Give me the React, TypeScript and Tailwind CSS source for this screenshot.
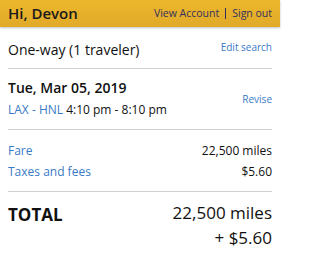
export default function App() {
  return (
    <div className="w-[280px] h-[258px] bg-white font-['Open_Sans',sans-serif] text-[#111]">
      <div className="h-[27px] bg-gradient-to-b from-[#edb72d] to-[#e0a928] shadow-[0_1px_2px_rgba(0,0,0,0.25)] flex items-center justify-between px-2">
        <span className="text-[15px] font-semibold text-[#1a1a1a]">Hi, Devon</span>
        <div className="flex items-center text-[10.5px] text-[#33305e]">
          <span>View Account</span>
          <span className="mx-[6px] h-[11px] w-px bg-[#33305e]" />
          <span>Sign out</span>
        </div>
      </div>
      <div className="px-2">
        <div className="flex items-center justify-between h-[42px] border-b border-[#cfcfcf]">
          <span className="text-[14px] mt-[4px]">One-way (1 traveler)</span>
          <span className="text-[10px] text-[#3b7ac6] -mt-[1px]">Edit search</span>
        </div>
        <div className="flex items-center justify-between h-[61px] border-b border-[#cfcfcf]">
          <div>
            <div className="text-[14px] leading-[20px] font-semibold">Tue, Mar 05, 2019</div>
            <div className="text-[12px] leading-[20px] mt-[2px]">
              <span className="text-[#3b7ac6]">LAX - HNL</span> 4:10 pm - 8:10 pm
            </div>
          </div>
          <span className="text-[10px] text-[#3b7ac6] mt-[1px]">Revise</span>
        </div>
        <div className="h-[62px] border-b border-[#cfcfcf] flex flex-col justify-center text-[12px] leading-[21px]">
          <div className="flex justify-between">
            <span className="text-[#3b7ac6]">Fare</span>
            <span>22,500 miles</span>
          </div>
          <div className="flex justify-between">
            <span className="text-[#3b7ac6]">Taxes and fees</span>
            <span>$5.60</span>
          </div>
        </div>
        <div className="flex justify-between pt-[8px] text-[17px] leading-[25px]">
          <span className="font-bold mt-[2px]">TOTAL</span>
          <div className="text-right">
            <div>22,500 miles</div>
            <div>+ $5.60</div>
          </div>
        </div>
      </div>
    </div>
  );
}
